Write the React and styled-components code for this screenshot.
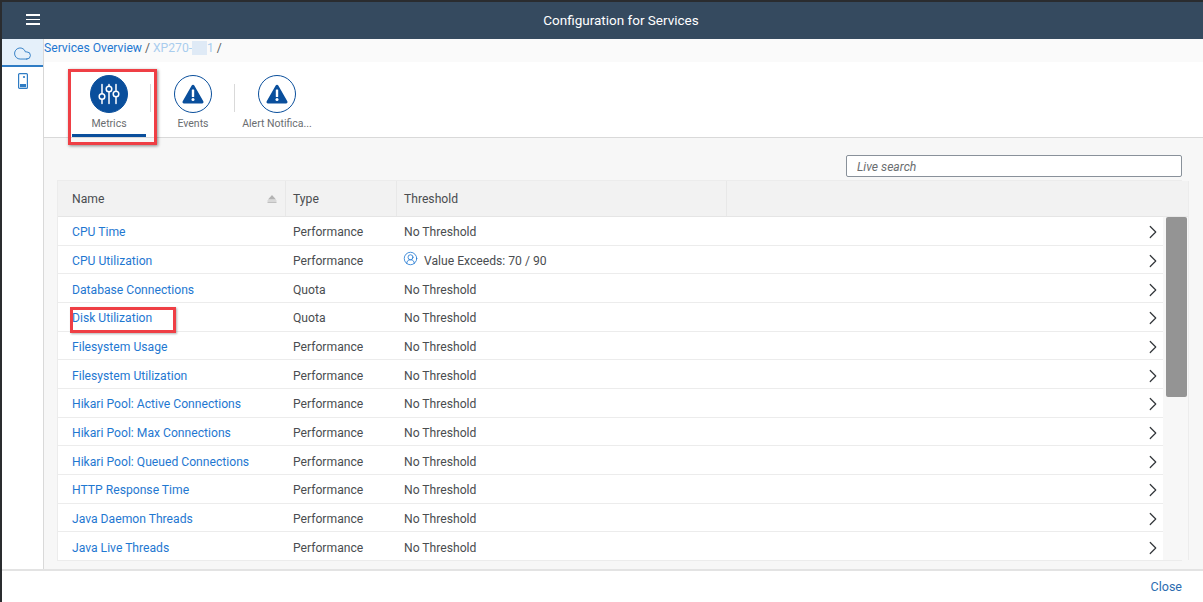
import styled, { createGlobalStyle } from 'styled-components'
import { Cloud, ChevronRight, CircleUserRound } from 'lucide-react'

const metrics = [
	{ name: 'CPU Time', type: 'Performance' },
	{ name: 'CPU Utilization', type: 'Performance', value: 'Value Exceeds: 70 / 90' },
	{ name: 'Database Connections', type: 'Quota' },
	{ name: 'Disk Utilization', type: 'Quota', marked: true },
	{ name: 'Filesystem Usage', type: 'Performance' },
	{ name: 'Filesystem Utilization', type: 'Performance' },
	{ name: 'Hikari Pool: Active Connections', type: 'Performance' },
	{ name: 'Hikari Pool: Max Connections', type: 'Performance' },
	{ name: 'Hikari Pool: Queued Connections', type: 'Performance' },
	{ name: 'HTTP Response Time', type: 'Performance' },
	{ name: 'Java Daemon Threads', type: 'Performance' },
	{ name: 'Java Live Threads', type: 'Performance' },
]

const SlidersIcon = () => (
	<svg width='22' height='22' viewBox='0 0 22 22' fill='none' stroke='#fff' strokeWidth='1.5' strokeLinecap='round'>
		<path d='M4 1.5v9M4 16.5v4M11 1.5v1.5M11 9v11.5M18 1.5v6M18 14v6.5' />
		<circle cx='4' cy='13.5' r='2.8' />
		<circle cx='11' cy='6' r='2.8' />
		<circle cx='18' cy='11' r='2.8' />
	</svg>
)

const WarningIcon = () => (
	<svg width='22' height='20' viewBox='0 0 22 20'>
		<path d='M11 .8c.6 0 1 .3 1.300.8l9 15.600c.6 1-.1 2.200-1.200 2.200H1.900C.8 19.400.1 18.200.7 17.200l9-15.600c.3-.5.8-.8 1.300-.8z' fill='#0a4f9c' />
		<rect x='9.800' y='5.500' width='2.400' height='7.500' rx='.6' fill='#fff' />
		<circle cx='11' cy='15.600' r='1.500' fill='#fff' />
	</svg>
)

const DeviceIcon = () => (
	<svg width='10' height='16' viewBox='0 0 10 16' fill='none'>
		<rect x='.6' y='.6' width='8.800' height='14.800' rx='1' stroke='#2f7cc4' strokeWidth='1.200' />
		<rect x='2' y='11' width='6' height='3.200' fill='#2f7cc4' />
		<circle cx='6' cy='4' r='1.100' fill='#2f7cc4' />
	</svg>
)

const App = () => (
	<>
		<GlobalStyle />
		<Window>
			<TitleBar>
				<MenuButton>
					<span />
					<span />
					<span />
				</MenuButton>
				<Title>Configuration for Services</Title>
			</TitleBar>

			<Body>
				<SideNav>
					<SideItem $active>
						<Cloud size={19} strokeWidth={1.200} />
					</SideItem>
					<SideItem>
						<DeviceIcon />
					</SideItem>
				</SideNav>

				<Main>
					<Breadcrumb>
						<a>Services Overview</a>
						<Slash>/</Slash>
						<Faded>XP270-<Redacted>1</Redacted>1</Faded>
						<Slash>/</Slash>
					</Breadcrumb>

					<TabBar>
						<Tab $selected>
							<TabIcon $filled><SlidersIcon /></TabIcon>
							<TabLabel>Metrics</TabLabel>
							<MetricsMark />
						</Tab>
						<Divider />
						<Tab>
							<TabIcon><WarningIcon /></TabIcon>
							<TabLabel>Events</TabLabel>
						</Tab>
						<Divider />
						<Tab>
							<TabIcon><WarningIcon /></TabIcon>
							<TabLabel>Alert Notifica...</TabLabel>
						</Tab>
					</TabBar>

					<Content>
						<SearchRow>
							<SearchInput placeholder='Live search' />
						</SearchRow>

						<TableWrap>
							<Table>
								<HeaderRow>
									<HeaderCell>
										Name
										<SortIcon viewBox='0 0 10 8' width='10' height='8'>
											<path d='M5 0l4 4.500H1z' fill='#b3b3b3' />
											<path d='M.5 6h9M.5 7.500h9' stroke='#b3b3b3' strokeWidth='.8' />
										</SortIcon>
									</HeaderCell>
									<HeaderCell>Type</HeaderCell>
									<HeaderCell>Threshold</HeaderCell>
									<HeaderCell />
								</HeaderRow>
								{metrics.map(metric => (
									<Row key={metric.name}>
										<Cell>
											<NameLink>{metric.name}</NameLink>
											{metric.marked && <DiskMark />}
										</Cell>
										<Cell>{metric.type}</Cell>
										<Cell>
											{metric.value && <UserIcon size={15} strokeWidth={1.300} />}
											{metric.value || 'No Threshold'}
										</Cell>
										<ArrowCell>
											<ChevronRight size={22} strokeWidth={1.300} />
										</ArrowCell>
									</Row>
								))}
							</Table>
							<ScrollColumn>
								<ScrollHead />
								<ScrollTrack>
									<ScrollThumb />
								</ScrollTrack>
							</ScrollColumn>
						</TableWrap>
					</Content>
				</Main>
			</Body>

			<Footer>
				<CloseButton>Close</CloseButton>
			</Footer>
		</Window>
	</>
)

const GlobalStyle = createGlobalStyle`
	html, body {
		margin: 0;
		background-color: #2a2c2f;
		overflow: hidden;
	}

	* {
		box-sizing: border-box;
	}
`

const Window = styled.div`
	display: flex;
	flex-direction: column;
	width: 1201px;
	height: 600px;
	margin: 2px 0 0 2px;
	background-color: #fff;
	font-family: Roboto, "Noto Sans", sans-serif;
	font-size: 12.150px;
	color: #4a4d50;
`

const TitleBar = styled.header`
	position: relative;
	flex: none;
	display: flex;
	align-items: center;
	justify-content: center;
	height: 37px;
	padding: 0 0 2px 37px;
	background-color: #354a5f;
`

const MenuButton = styled.div`
	position: absolute;
	left: 24px;
	top: 12px;
	display: flex;
	flex-direction: column;
	gap: 3px;

	span {
		display: block;
		width: 14px;
		height: 1.500px;
		background-color: #fff;
	}
`

const Title = styled.h1`
	margin: 0;
	font-size: 13.500px;
	font-weight: 400;
	color: #fff;
`

const Body = styled.div`
	flex: 1;
	display: flex;
	min-height: 0;
`

const SideNav = styled.nav`
	flex: none;
	width: 42px;
	border-right: 1px solid #d9d9d9;
	background-color: #fff;
`

const SideItem = styled.div`
	display: flex;
	align-items: center;
	justify-content: center;
	height: ${({ $active }) => ($active ? '28px' : '26px')};
	padding-top: ${({ $active }) => ($active ? '2px' : '0')};
	margin-bottom: 1px;
	color: #2f7cc4;
	background-color: ${({ $active }) => ($active ? '#e5f0fa' : 'transparent')};
	border-bottom: ${({ $active }) => ($active ? '2px solid #2f7cc4' : 'none')};
`

const Main = styled.main`
	flex: 1;
	display: flex;
	flex-direction: column;
	min-width: 0;
`

const Breadcrumb = styled.div`
	flex: none;
	display: flex;
	align-items: flex-start;
	height: 23px;
	line-height: 19px;
	background-color: #fafafa;

	a {
		color: #1f78d1;
	}
`

const Slash = styled.span`
	margin: 0 3px 0 3px;
	color: #5a5d60;
`

const Faded = styled.span`
	color: #a9cdee;
`

const Redacted = styled.span`
	color: transparent;
	background-color: #dfeaf6;
	padding: 0 4px;
`

const TabBar = styled.div`
	flex: none;
	display: flex;
	align-items: flex-start;
	height: 76px;
	padding-left: 28px;
	background-color: #fff;
	border-bottom: 1px solid #d9d9d9;
	box-shadow: 0 1px 1px rgba(0, 0, 0, 0.05);
`

const Tab = styled.div`
	position: relative;
	display: flex;
	flex-direction: column;
	align-items: center;
	width: 74px;
	height: 75px;
	padding-top: 12px;
	border-bottom: 3px solid ${({ $selected }) => ($selected ? '#0a4f9c' : 'transparent')};
`

const TabIcon = styled.div`
	display: flex;
	align-items: center;
	justify-content: center;
	width: 38px;
	height: 38px;
	margin-top: 1px;
	border-radius: 50%;
	border: 1.500px solid #0a4f9c;
	background-color: ${({ $filled }) => ($filled ? '#0a4f9c' : '#fff')};
`

const TabLabel = styled.div`
	margin-top: 3px;
	font-size: 10.500px;
	line-height: 15px;
	white-space: nowrap;
	color: #6a6d70;
`

const Divider = styled.div`
	flex: none;
	width: 1px;
	height: 28px;
	margin: 22px 5px 0 4px;
	background-color: #d9d9d9;
`

const MetricsMark = styled.div`
	position: absolute;
	left: -4px;
	top: 7px;
	width: 89px;
	height: 76px;
	border: 3px solid #ef3f45;
	box-shadow: 1px 1px 3px rgba(0, 0, 0, 0.45);
	pointer-events: none;
`

const Content = styled.section`
	flex: 1;
	display: flex;
	flex-direction: column;
	min-height: 0;
	padding: 17px 21px 8px 13px;
	background-color: #f7f7f7;
`

const SearchRow = styled.div`
	flex: none;
	display: flex;
	justify-content: flex-end;
	height: 25px;
`

const SearchInput = styled.input`
	width: 336px;
	height: 22px;
	padding: 1px 10px 0;
	border: 1px solid #89919a;
	border-radius: 2px;
	background-color: #fff;
	font-family: inherit;
	font-size: 12.150px;
	font-style: italic;
	outline: none;

	&::placeholder {
		color: #6a6d70;
		opacity: 1;
	}
`

const TableWrap = styled.div`
	flex: 1;
	display: flex;
	min-height: 0;
	border: 1px solid #ececec;
	border-right: none;
`

const Table = styled.div`
	flex: none;
	width: 1105px;
	background-color: #fff;
`

const columns = `
	display: grid;
	grid-template-columns: 228px 111px 330px 1fr;
`

const HeaderRow = styled.div`
	${columns}
	height: 36px;
	background-color: #f2f2f2;
	border-bottom: 1px solid #e5e5e5;
`

const HeaderCell = styled.div`
	display: flex;
	align-items: center;
	justify-content: space-between;
	padding: 0 8px 0 14px;
	border-right: 1px solid #e8e8e8;

	&:nth-child(n + 2) {
		padding-left: 7px;
	}

	&:last-child {
		border-right: none;
	}
`

const SortIcon = styled.svg`
	flex: none;
`

const Row = styled.div`
	${columns}
	height: 28.680px;
	padding-top: 3px;
	border-bottom: 1px solid #ececec;

	&:last-child {
		border-bottom: none;
	}
`

const Cell = styled.div`
	position: relative;
	display: flex;
	align-items: center;
	gap: 6px;
	padding-left: 7px;
	white-space: nowrap;

	&:first-child {
		padding-left: 14px;
	}
`

const NameLink = styled.a`
	color: #1f78d1;
`

const DiskMark = styled.div`
	position: absolute;
	left: 12px;
	top: 1px;
	width: 106px;
	height: 26px;
	border: 3px solid #ef3f45;
	box-shadow: 1px 1px 2px rgba(0, 0, 0, 0.3);
	pointer-events: none;
`

const UserIcon = styled(CircleUserRound)`
	flex: none;
	margin: -5px 0 0 -1px;
	color: #1f78d1;
`

const ArrowCell = styled.div`
	display: flex;
	align-items: center;
	justify-content: flex-end;
	margin-right: -1px;
	color: #32363a;
`

const ScrollColumn = styled.div`
	flex: none;
	display: flex;
	flex-direction: column;
	width: 26px;
	background-color: #f7f7f7;
	border-right: 1px solid #ececec;
`

const ScrollHead = styled.div`
	flex: none;
	height: 36px;
	background-color: #f2f2f2;
	border-bottom: 1px solid #e8e8e8;
`

const ScrollTrack = styled.div`
	flex: 1;
	padding: 0 1px 0 3px;
`

const ScrollThumb = styled.div`
	height: 180px;
	border-radius: 2px;
	background-color: #949494;
`

const Footer = styled.footer`
	flex: none;
	display: flex;
	align-items: center;
	justify-content: flex-end;
	height: 33px;
	padding: 0 21px 1px 0;
	background-color: #fff;
	border-top: 2px solid #e3e3e3;
`

const CloseButton = styled.a`
	font-size: 12.500px;
	color: #2b6cb0;
`

export default App
